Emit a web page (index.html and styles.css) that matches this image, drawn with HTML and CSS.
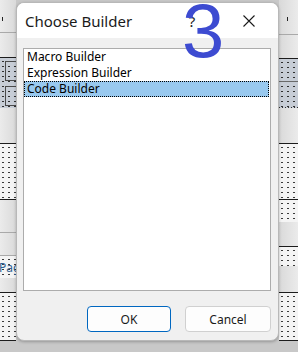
FILE: index.html
```html
<!DOCTYPE html>
<html>
<head>
<meta charset="utf-8">
<link rel="stylesheet" href="styles.css">
</head>
<body>
<div class="screen">
  <div class="bg">
    <div class="col col-left">
      <div class="band ruler"><span class="tick"></span></div>
      <div class="rule"></div>
      <div class="band"></div>
      <div class="dark"></div>
      <div class="bluedots ctrls"><span class="ctrl"></span><span class="ctrl"></span></div>
      <div class="band"></div>
      <div class="dark"></div>
      <div class="dots"></div>
      <div class="dark"></div>
      <div class="band"></div>
      <div class="rule"></div>
      <div class="band"></div>
      <div class="rule"></div>
      <div class="dots label"><span class="pag">Page</span></div>
      <div class="band"></div>
      <div class="dark"></div>
      <div class="dots"></div>
      <div class="dark"></div>
      <div class="below"></div>
    </div>
    <div class="mid"></div>
    <div class="col col-right">
      <div class="band ruler"><span class="tick"></span></div>
      <div class="rule"></div>
      <div class="band"></div>
      <div class="dark"></div>
      <div class="bluedots"></div>
      <div class="rule2"></div>
      <div class="bluedots"></div>
      <div class="dotline"></div>
      <div class="band"></div>
      <div class="dark"></div>
      <div class="dots"></div>
      <div class="dark"></div>
      <div class="dots"></div>
      <div class="band"></div>
      <div class="dark"></div>
      <div class="dots"></div>
      <div class="band"></div>
      <div class="dark"></div>
      <div class="dots"></div>
      <div class="dark"></div>
      <div class="below"></div>
    </div>
  </div>

  <div class="dialog">
    <div class="titlebar">
      <span class="title">Choose Builder</span>
      <span class="help">?</span>
      <span class="close">
        <svg width="12" height="12" viewBox="0 0 12 12"><path d="M0.5 0.5 L11.5 11.5 M11.5 0.5 L0.5 11.5" stroke="#1a1a1a" stroke-width="1.1" fill="none"/></svg>
      </span>
    </div>
    <div class="body">
      <div class="listbox">
        <div class="item">Macro Builder</div>
        <div class="item">Expression Builder</div>
        <div class="item selected">Code Builder</div>
      </div>
      <div class="buttons">
        <button class="btn default">OK</button>
        <button class="btn cancel">Cancel</button>
      </div>
    </div>
  </div>

  <div class="mark">3</div>
</div>
</body>
</html>
```

FILE: styles.css
```css
html, body {
  margin: 0;
  padding: 0;
}

.screen {
  position: relative;
  width: 298px;
  height: 352px;
  overflow: hidden;
  font-family: "Noto Sans", "Open Sans", sans-serif;
  background: #c8c8c8;
}

.bg {
  display: flex;
  height: 100%;
}

.col {
  display: grid;
}

.col-left {
  width: 16px;
  grid-template-rows: 32px 1px 24px 1px 50px 35px 1px 55px 1px 32px 1px 22px 1px 22px 14px 1px 47px 1px 1fr;
}

.col-right {
  width: 19px;
  grid-template-rows: 34px 1px 23px 1px 22px 2px 24px 1px 35px 1px 55px 1px 22px 24px 1px 19px 26px 1px 47px 1px 1fr;
}

.mid {
  flex: 1;
}

.band {
  background: linear-gradient(to right, #ebebeb, #dadada);
}

.col-right .band {
  background: linear-gradient(to right, #d9d9d9, #ebebeb);
}

.rule {
  background: #a9a9a9;
}

.rule2 {
  background: linear-gradient(to bottom, #6a6a6a 50%, #c6ccd6 50%);
}

.dotline {
  background-image: linear-gradient(to right, #333 50%, transparent 50%);
  background-size: 3px 1px;
  background-color: #c6ccd6;
}

.dark {
  background: #1c1c1c;
}

.dots {
  background-color: #f4f4f4;
  background-image: radial-gradient(circle, #3a3a3a 0.7px, transparent 1px);
  background-size: 6px 5px;
  background-position: 0 1px;
}

.bluedots {
  background-color: #c7cdd6;
  background-image: radial-gradient(circle, #2e2e2e 0.7px, transparent 1px);
  background-size: 6px 5px;
  background-position: 0 1px;
}

.below {
  background: #c8c8c8;
}

.ruler {
  display: flex;
  align-items: flex-start;
  padding-top: 17px;
  box-sizing: border-box;
}

.col-left .ruler {
  padding-left: 2px;
}

.col-right .ruler {
  padding-left: 8px;
}

.tick {
  width: 1px;
  height: 4px;
  background: #222;
}

.ctrls {
  display: flex;
  flex-direction: column;
  gap: 5px;
  padding: 3px 0 2px 5px;
}

.ctrl {
  flex: 1;
  border: 1px solid #4a4a4a;
  border-right: none;
}

.label {
  display: flex;
  align-items: center;
  overflow: hidden;
}

.pag {
  font-family: "Noto Sans", sans-serif;
  font-size: 12px;
  color: #2f5f92;
  margin-left: -1px;
  white-space: nowrap;
}

/* dialog */
.dialog {
  position: absolute;
  left: 16px;
  top: 2px;
  width: 263px;
  height: 339px;
  box-sizing: border-box;
  border: 1px solid #b8b8b8;
  border-radius: 8px;
  background: #f0f0f0;
  display: flex;
  flex-direction: column;
  overflow: hidden;
  box-shadow: 0 1px 3px rgba(0, 0, 0, 0.25);
}

.titlebar {
  height: 35px;
  flex: none;
  background: #ffffff;
  display: flex;
  align-items: center;
  padding-left: 8px;
  color: #1a1a1a;
}

.title {
  font-size: 15px;
}

.help {
  margin-left: auto;
  width: 46px;
  text-align: center;
  font-size: 15px;
}

.close {
  width: 46px;
  margin-left: 11px;
  margin-right: 6px;
  display: flex;
  justify-content: center;
  align-items: center;
}

.body {
  flex: 1;
  display: flex;
  flex-direction: column;
  padding: 10px 7px 8px 6px;
}

.listbox {
  height: 243px;
  box-sizing: border-box;
  border: 1px solid #acacac;
  background: #ffffff;
  padding: 0 1px 0 0;
}

.item {
  height: 16px;
  box-sizing: border-box;
  border: 1px solid transparent;
  padding-left: 2px;
  font-size: 12px;
  line-height: 14px;
  color: #000;
  white-space: nowrap;
}

.item.selected {
  background: #99c9ef;
  border: 1px dotted #000;
}

.buttons {
  margin-top: 15px;
  display: flex;
  justify-content: flex-end;
  gap: 14px;
}

.btn {
  height: 26px;
  box-sizing: border-box;
  border-radius: 4px;
  background: #fdfdfd;
  font-family: "Noto Sans", sans-serif;
  font-size: 12px;
  color: #1a1a1a;
  padding: 0;
}

.btn.default {
  width: 84px;
  border: 1px solid #0067c0;
}

.btn.cancel {
  width: 86px;
  border: 1px solid #d0d0d0;
}

.mark {
  position: absolute;
  left: 182px;
  top: -7px;
  font-family: "Liberation Sans", sans-serif;
  font-size: 76px;
  line-height: 1;
  color: #3d4bd1;
}
```
